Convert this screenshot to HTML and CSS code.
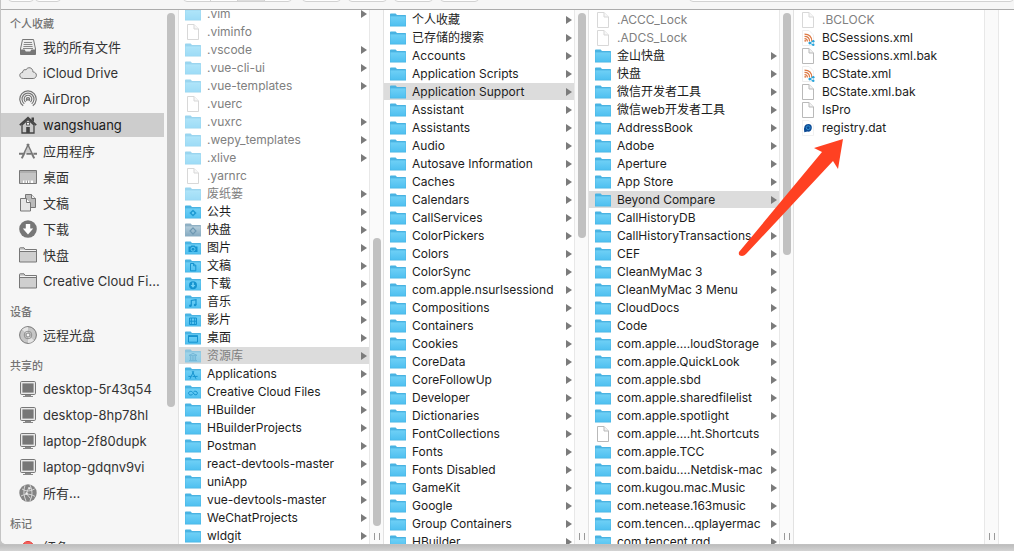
FILE: index.html
```html
<!DOCTYPE html>
<html lang="zh-CN">
<head>
<meta charset="utf-8">
<title>wangshuang</title>
<link rel="stylesheet" href="styles.css">
</head>
<body>
<svg class="defs" aria-hidden="true">
  <defs>
    <linearGradient id="blue" x1="0" y1="0" x2="0" y2="1"><stop offset="0" stop-color="#6fd0f6"/><stop offset="1" stop-color="#4fc0f0"/></linearGradient>
    <linearGradient id="dull" x1="0" y1="0" x2="0" y2="1"><stop offset="0" stop-color="#b4cddb"/><stop offset="1" stop-color="#86abc2"/></linearGradient>
    <symbol id="dir" viewBox="0 0 16 14"><path d="M0 1.2Q0 .4.8.4H5.6L7 2H15.4Q16 2 16 2.8V13.6H0Z" fill="#49b3e2"/><path d="M.4 3.4H15.6V12.8H.4Z" fill="url(#blue)"/></symbol>
    <symbol id="dir-dull" viewBox="0 0 16 14"><path d="M0 1.2Q0 .4.8.4H5.6L7 2H15.4Q16 2 16 2.8V13.6H0Z" fill="#8fb0c4"/><path d="M.4 3.4H15.6V12.8H.4Z" fill="url(#dull)"/><path d="M8 4.8 11 8 8 11.2 5 8Z" fill="none" stroke="#6f98b2" stroke-width="1.2"/></symbol>
    <symbol id="public" viewBox="0 0 16 14"><use href="#dir"/><path d="M8 4.4 11.6 8 8 11.6 4.4 8Z" fill="#1e9bd4"/><circle cx="8" cy="8" r="1.2" fill="#63caf4"/></symbol>
    <symbol id="pics" viewBox="0 0 16 14"><use href="#dir"/><path d="M3.5 5.5H5.6L6.4 4.5H9.6L10.4 5.5H12.5V11H3.5Z" fill="#1593cf"/><circle cx="8" cy="8.2" r="2" fill="none" stroke="#63caf4"/></symbol>
    <symbol id="docs" viewBox="0 0 16 14"><use href="#dir"/><path d="M5.5 4.5H8.8L10.8 6.5V11.8H5.5ZM8.6 4.5V6.8H10.8" fill="none" stroke="#1593cf"/></symbol>
    <symbol id="down" viewBox="0 0 16 14"><use href="#dir"/><circle cx="8" cy="8.2" r="4" fill="#1593cf"/><path d="M7.2 5.6H8.8V8H10.4L8 10.8 5.6 8H7.2Z" fill="#74d2f7"/></symbol>
    <symbol id="music" viewBox="0 0 16 14"><use href="#dir"/><path d="M6.3 10.8V5.4L11 4.6V10" fill="none" stroke="#1593cf" stroke-width="1.2"/><circle cx="5.4" cy="10.8" r="1.3" fill="#1593cf"/><circle cx="10.1" cy="10" r="1.3" fill="#1593cf"/></symbol>
    <symbol id="film" viewBox="0 0 16 14"><use href="#dir"/><path d="M4.5 5H11.5V11.5H4.5ZM6.3 5V11.5M9.7 5V11.5M4.5 8.2H11.5" fill="none" stroke="#1593cf"/></symbol>
    <symbol id="desk" viewBox="0 0 16 14"><use href="#dir"/><path d="M3.5 4.8H12.5V11.2H3.5Z" fill="none" stroke="#1593cf"/><path d="M3 4.4H13V6H3Z" fill="#1593cf"/></symbol>
    <symbol id="lib" viewBox="0 0 16 14"><use href="#dir"/><path d="M4 6.4 8 4.4 12 6.4ZM4 11.6H12M5.4 7V11M7.2 7V11M8.9 7V11M10.6 7V11" fill="none" stroke="#1593cf" stroke-width=".9"/></symbol>
    <symbol id="apps" viewBox="0 0 16 14"><use href="#dir"/><path d="M8.8 4.2 5 11.8M7.2 4.2 11 11.8M3.4 9.4H6M7.6 9.4H12.6" fill="none" stroke="#1593cf" stroke-width="1"/></symbol>
    <symbol id="cc" viewBox="0 0 16 14"><use href="#dir"/><path d="M8 8.8C6.6 10.8 3.6 10.2 3.6 8.2S6.6 5.6 8 7.6L9 9C10 10.4 12.4 10 12.4 8.2S10 5.4 8.6 6.8" fill="none" stroke="#1593cf"/></symbol>
    <symbol id="file" viewBox="0 0 16 16"><path d="M2.5.5H9L13.5 5V15.5H2.5Z" fill="#fff" stroke="#b9b9b9"/><path d="M9 .5V5H13.5" fill="#f2f2f2" stroke="#b9b9b9"/></symbol>
    <symbol id="xml" viewBox="0 0 16 16"><path d="M2.5.5H9L13.5 5V15.5H2.5Z" fill="#fff" stroke="#eee"/><path d="M4.5 8.6Q7.4 8.6 7.4 11.5M4.5 6.3Q9.6 6.3 9.6 11.5M4.5 4.1Q11.8 4.1 11.8 11.5" fill="none" stroke="#dd7a45" stroke-width="1.2"/><circle cx="5.2" cy="10.8" r=".9" fill="#dd7a45"/><path d="M13.2 11 9.8 13 13.2 15" fill="none" stroke="#2aa5dc" stroke-width="1"/><circle cx="13.3" cy="11.2" r="1.2" fill="#2aa5dc"/><circle cx="9.8" cy="13.1" r="1.4" fill="#2aa5dc"/><circle cx="13.3" cy="14.8" r="1.2" fill="#2aa5dc"/></symbol>
    <symbol id="dat" viewBox="0 0 16 16"><path d="M2.5.5H9L13.5 5V15.5H2.5Z" fill="#fff" stroke="#f1f1f1"/><path d="M4.3 12.2Q3 4 8.3 4 12 4.2 11.8 8 11.4 12 7.4 11.6L4.3 12.2Z" fill="#0c4a94"/><circle cx="8.2" cy="7.7" r="1.9" fill="none" stroke="#2f8fd0"/></symbol>

    <symbol id="s-all" viewBox="0 0 18 18"><path d="M3.5 1.5H14.5L16.5 11V16.5H1.5V11Z" fill="#eee" stroke="#777"/><path d="M5 4.5H13M4.6 6.5H13.4M4.4 8.5H13.6M4 10.5H14" stroke="#888"/><path d="M1.5 11.5H5.6L6.8 13.5H11.2L12.4 11.5H16.5V16.5H1.5Z" fill="#777"/></symbol>
    <symbol id="s-cloud" viewBox="0 0 18 18"><path d="M4.3 14.5C-.4 14.3-.2 8.6 3.6 8.5 3.4 5.8 6.2 5.2 7 5.9 8.5 2.3 14 3.3 13.9 7.9 18.6 8.2 18.4 14.2 14.2 14.5Z" fill="#e4e4e4" stroke="#777"/></symbol>
    <symbol id="s-air" viewBox="0 0 18 18"><g fill="none" stroke="#777" stroke-width="1.2"><path d="M4.2 15.8A8.2 8.2 0 1 1 13.8 15.8"/><path d="M5.3 13.8A6 6 0 1 1 12.7 13.8"/><path d="M6.6 12A3.8 3.8 0 1 1 11.4 12"/><circle cx="9" cy="9.2" r="1.7"/></g><path d="M9 9.5 5.4 17H12.6Z" fill="#f6f6f6"/><circle cx="9" cy="9.2" r="1" fill="#777"/></symbol>
    <symbol id="s-home" viewBox="0 0 18 18"><path d="M3 9V17H15V9L9 3.5Z" fill="#c9c9c9" stroke="#444" stroke-width="1.3"/><path d="M.8 9.2 9 1.8 17.2 9.2" fill="none" stroke="#444" stroke-width="1.8"/><path d="M12.5 1.5H15V6L12.5 4Z" fill="#444"/><path d="M7.2 11H10.8V17H7.2Z" fill="#444"/><rect x="7.6" y="6.4" width="2.8" height="2.6" fill="#fff" stroke="#444" stroke-width=".8"/></symbol>
    <symbol id="s-apps" viewBox="0 0 18 18"><g fill="none" stroke="#777" stroke-width="2"><path d="M9.8 2 2.8 16.4"/><path d="M8.2 2 15.2 16.4"/><path d="M0 11.8H4.6M7.4 11.8H12M14.4 11.8H18"/></g><path d="M9 4.6 6 10.8H12Z" fill="#ccc"/></symbol>
    <symbol id="s-desk" viewBox="0 0 18 18"><path d="M.5 2.5H17.5V15.5H.5Z" fill="#c4c4c4" stroke="#777"/><path d="M1 4H17" stroke="#999"/><path d="M4 12.5H14V15H4Z" fill="#fff"/><path d="M6 12.5V15M8.5 12.5V15M11 12.5V15" stroke="#999"/></symbol>
    <symbol id="s-docs" viewBox="0 0 18 18"><path d="M6.5.5H12.5L16.5 4.5V13.5H6.5Z" fill="#bbb" stroke="#777"/><path d="M12.5.5V4.5H16.5" fill="#eee" stroke="#777"/><path d="M1.5 4.5H7.5L11.5 8.5V17H1.5Z" fill="#e6e6e6" stroke="#777"/><path d="M7.5 4.5V8.5H11.5" fill="#fff" stroke="#777"/></symbol>
    <symbol id="s-down" viewBox="0 0 18 18"><circle cx="9" cy="9" r="8.8" fill="#777"/><path d="M6.8 4H11.2V8.6H14.2L9 14.4 3.8 8.6H6.8Z" fill="#fff"/></symbol>
    <symbol id="s-dir" viewBox="0 0 18 18"><path d="M.5 16V2.5Q.5 1.8 1.2 1.8H5L6.2 3.5H17.5V16Z" fill="#cfcfcf" stroke="#777"/><path d="M1 5.5H17" stroke="#777"/><path d="M1 4.5H17" stroke="#f4f4f4"/></symbol>
    <symbol id="s-disc" viewBox="0 0 18 18"><circle cx="9" cy="9" r="8.4" fill="#c6c6c6" stroke="#777"/><path d="M9 9 3 3.6Q5.6 1 9 .9ZM9 9 15 14.4Q12.4 17 9 17.1Z" fill="#e5e5e5"/><circle cx="9" cy="9" r="3.8" fill="none" stroke="#909090"/><circle cx="9" cy="9" r="2" fill="#f4f4f4" stroke="#888"/></symbol>
    <symbol id="s-pc" viewBox="0 0 18 18"><rect x="1.5" y="1.5" width="15" height="13" rx="1.2" fill="#e9e9e9" stroke="#777"/><path d="M3.4 3.4H14.6V12.6H3.4Z" fill="#777"/><path d="M6 15H12V16H14V17H4V16H6Z" fill="#888"/></symbol>
    <symbol id="s-globe" viewBox="0 0 18 18"><circle cx="9" cy="9" r="8.7" fill="#838383"/><path d="M3 5Q9 9 15.6 5M2 12Q9 8 16 12.4M6 1.2Q3.4 9 7 17M11 1Q15 9 11 17M10 3 7.4 9.6 11.6 14.6" fill="none" stroke="#ddd" stroke-width=".9"/><circle cx="7.6" cy="9.4" r="1.2" fill="#eee"/><circle cx="10.6" cy="4.4" r="1.1" fill="#eee"/></symbol>
    <symbol id="s-red" viewBox="0 0 18 18"><circle cx="9" cy="9" r="5.6" fill="#f5605c" stroke="#e0443f"/></symbol>
  </defs>
</svg>

<main class="window">
  <header class="toolbar">
    <div class="group nav"><button aria-label="后退"></button><button aria-label="前进"></button></div>
    <div class="group views"><button aria-label="图标"></button><button aria-label="列表"></button><button class="on" aria-label="分栏"></button><button aria-label="封面流"></button></div>
    <button class="tool" aria-label="排列"></button>
    <button class="tool" aria-label="操作"></button>
    <button class="tool" aria-label="共享"></button>
    <button class="tool" aria-label="标记"></button>
    <input class="search" type="search" aria-label="搜索">
  </header>
  <div class="panes">
    <nav class="sidebar">
      <div class="places">
        <h2>个人收藏</h2>
        <a href="#"><svg><use href="#s-all"/></svg>我的所有文件</a>
        <a href="#"><svg><use href="#s-cloud"/></svg>iCloud Drive</a>
        <a href="#"><svg><use href="#s-air"/></svg>AirDrop</a>
        <a href="#" class="current"><svg><use href="#s-home"/></svg>wangshuang</a>
        <a href="#"><svg><use href="#s-apps"/></svg>应用程序</a>
        <a href="#"><svg><use href="#s-desk"/></svg>桌面</a>
        <a href="#"><svg><use href="#s-docs"/></svg>文稿</a>
        <a href="#"><svg><use href="#s-down"/></svg>下载</a>
        <a href="#"><svg><use href="#s-dir"/></svg>快盘</a>
        <a href="#"><svg><use href="#s-dir"/></svg>Creative Cloud Fi...</a>
        <h2>设备</h2>
        <a href="#"><svg><use href="#s-disc"/></svg>远程光盘</a>
        <h2>共享的</h2>
        <a href="#"><svg><use href="#s-pc"/></svg>desktop-5r43q54</a>
        <a href="#"><svg><use href="#s-pc"/></svg>desktop-8hp78hl</a>
        <a href="#"><svg><use href="#s-pc"/></svg>laptop-2f80dupk</a>
        <a href="#"><svg><use href="#s-pc"/></svg>laptop-gdqnv9vi</a>
        <a href="#"><svg><use href="#s-globe"/></svg>所有...</a>
        <h2>标记</h2>
        <a href="#"><svg><use href="#s-red"/></svg>红色</a>
      </div>
      <div class="track"><span class="thumb" style="height:394px"></span></div>
    </nav>

    <section class="column">
      <ul class="list scrolled">
        <li class="dir dim"><svg><use href="#dir"/></svg>.vim</li>
        <li class="dim"><svg><use href="#file"/></svg>.viminfo</li>
        <li class="dir dim"><svg><use href="#dir"/></svg>.vscode</li>
        <li class="dir dim"><svg><use href="#dir"/></svg>.vue-cli-ui</li>
        <li class="dir dim"><svg><use href="#dir"/></svg>.vue-templates</li>
        <li class="dim"><svg><use href="#file"/></svg>.vuerc</li>
        <li class="dir dim"><svg><use href="#dir"/></svg>.vuxrc</li>
        <li class="dir dim"><svg><use href="#dir"/></svg>.wepy_templates</li>
        <li class="dir dim"><svg><use href="#dir"/></svg>.xlive</li>
        <li class="dim"><svg><use href="#file"/></svg>.yarnrc</li>
        <li class="dir dim"><svg><use href="#dir"/></svg>废纸篓</li>
        <li class="dir"><svg><use href="#public"/></svg>公共</li>
        <li class="dir"><svg><use href="#dir-dull"/></svg>快盘</li>
        <li class="dir"><svg><use href="#pics"/></svg>图片</li>
        <li class="dir"><svg><use href="#docs"/></svg>文稿</li>
        <li class="dir"><svg><use href="#down"/></svg>下载</li>
        <li class="dir"><svg><use href="#music"/></svg>音乐</li>
        <li class="dir"><svg><use href="#film"/></svg>影片</li>
        <li class="dir"><svg><use href="#desk"/></svg>桌面</li>
        <li class="dir dim current"><svg><use href="#lib"/></svg>资源库</li>
        <li class="dir"><svg><use href="#apps"/></svg>Applications</li>
        <li class="dir"><svg><use href="#cc"/></svg>Creative Cloud Files</li>
        <li class="dir"><svg><use href="#dir"/></svg>HBuilder</li>
        <li class="dir"><svg><use href="#dir"/></svg>HBuilderProjects</li>
        <li class="dir"><svg><use href="#dir"/></svg>Postman</li>
        <li class="dir"><svg><use href="#dir"/></svg>react-devtools-master</li>
        <li class="dir"><svg><use href="#dir"/></svg>uniApp</li>
        <li class="dir"><svg><use href="#dir"/></svg>vue-devtools-master</li>
        <li class="dir"><svg><use href="#dir"/></svg>WeChatProjects</li>
        <li class="dir"><svg><use href="#dir"/></svg>wldgit</li>
      </ul>
      <div class="track end"><span class="thumb" style="height:288px"></span><span class="grip"></span></div>
    </section>

    <section class="column">
      <ul class="list">
        <li class="dir"><svg><use href="#dir"/></svg>个人收藏</li>
        <li class="dir"><svg><use href="#dir"/></svg>已存储的搜索</li>
        <li class="dir"><svg><use href="#dir"/></svg>Accounts</li>
        <li class="dir"><svg><use href="#dir"/></svg>Application Scripts</li>
        <li class="dir current"><svg><use href="#dir"/></svg>Application Support</li>
        <li class="dir"><svg><use href="#dir"/></svg>Assistant</li>
        <li class="dir"><svg><use href="#dir"/></svg>Assistants</li>
        <li class="dir"><svg><use href="#dir"/></svg>Audio</li>
        <li class="dir"><svg><use href="#dir"/></svg>Autosave Information</li>
        <li class="dir"><svg><use href="#dir"/></svg>Caches</li>
        <li class="dir"><svg><use href="#dir"/></svg>Calendars</li>
        <li class="dir"><svg><use href="#dir"/></svg>CallServices</li>
        <li class="dir"><svg><use href="#dir"/></svg>ColorPickers</li>
        <li class="dir"><svg><use href="#dir"/></svg>Colors</li>
        <li class="dir"><svg><use href="#dir"/></svg>ColorSync</li>
        <li class="dir"><svg><use href="#dir"/></svg>com.apple.nsurlsessiond</li>
        <li class="dir"><svg><use href="#dir"/></svg>Compositions</li>
        <li class="dir"><svg><use href="#dir"/></svg>Containers</li>
        <li class="dir"><svg><use href="#dir"/></svg>Cookies</li>
        <li class="dir"><svg><use href="#dir"/></svg>CoreData</li>
        <li class="dir"><svg><use href="#dir"/></svg>CoreFollowUp</li>
        <li class="dir"><svg><use href="#dir"/></svg>Developer</li>
        <li class="dir"><svg><use href="#dir"/></svg>Dictionaries</li>
        <li class="dir"><svg><use href="#dir"/></svg>FontCollections</li>
        <li class="dir"><svg><use href="#dir"/></svg>Fonts</li>
        <li class="dir"><svg><use href="#dir"/></svg>Fonts Disabled</li>
        <li class="dir"><svg><use href="#dir"/></svg>GameKit</li>
        <li class="dir"><svg><use href="#dir"/></svg>Google</li>
        <li class="dir"><svg><use href="#dir"/></svg>Group Containers</li>
        <li class="dir"><svg><use href="#dir"/></svg>HBuilder</li>
      </ul>
      <div class="track"><span class="thumb" style="height:225px"></span><span class="grip"></span></div>
    </section>

    <section class="column">
      <ul class="list">
        <li class="dim"><svg><use href="#file"/></svg>.ACCC_Lock</li>
        <li class="dim"><svg><use href="#file"/></svg>.ADCS_Lock</li>
        <li class="dir"><svg><use href="#dir"/></svg>金山快盘</li>
        <li class="dir"><svg><use href="#dir"/></svg>快盘</li>
        <li class="dir"><svg><use href="#dir"/></svg>微信开发者工具</li>
        <li class="dir"><svg><use href="#dir"/></svg>微信web开发者工具</li>
        <li class="dir"><svg><use href="#dir"/></svg>AddressBook</li>
        <li class="dir"><svg><use href="#dir"/></svg>Adobe</li>
        <li class="dir"><svg><use href="#dir"/></svg>Aperture</li>
        <li class="dir"><svg><use href="#dir"/></svg>App Store</li>
        <li class="dir current"><svg><use href="#dir"/></svg>Beyond Compare</li>
        <li><svg><use href="#dir"/></svg>CallHistoryDB</li>
        <li class="dir"><svg><use href="#dir"/></svg>CallHistoryTransactions</li>
        <li class="dir"><svg><use href="#dir"/></svg>CEF</li>
        <li class="dir"><svg><use href="#dir"/></svg>CleanMyMac 3</li>
        <li class="dir"><svg><use href="#dir"/></svg>CleanMyMac 3 Menu</li>
        <li class="dir"><svg><use href="#dir"/></svg>CloudDocs</li>
        <li class="dir"><svg><use href="#dir"/></svg>Code</li>
        <li class="dir"><svg><use href="#dir"/></svg>com.apple....loudStorage</li>
        <li class="dir"><svg><use href="#dir"/></svg>com.apple.QuickLook</li>
        <li class="dir"><svg><use href="#dir"/></svg>com.apple.sbd</li>
        <li class="dir"><svg><use href="#dir"/></svg>com.apple.sharedfilelist</li>
        <li class="dir"><svg><use href="#dir"/></svg>com.apple.spotlight</li>
        <li><svg><use href="#file"/></svg>com.apple....ht.Shortcuts</li>
        <li class="dir"><svg><use href="#dir"/></svg>com.apple.TCC</li>
        <li class="dir"><svg><use href="#dir"/></svg>com.baidu....Netdisk-mac</li>
        <li class="dir"><svg><use href="#dir"/></svg>com.kugou.mac.Music</li>
        <li class="dir"><svg><use href="#dir"/></svg>com.netease.163music</li>
        <li class="dir"><svg><use href="#dir"/></svg>com.tencen...qplayermac</li>
        <li class="dir"><svg><use href="#dir"/></svg>com.tencent.rqd</li>
      </ul>
      <div class="track"><span class="thumb" style="height:242px"></span><span class="grip"></span></div>
    </section>

    <section class="column">
      <ul class="list">
        <li class="dim"><svg><use href="#file"/></svg>.BCLOCK</li>
        <li><svg><use href="#xml"/></svg>BCSessions.xml</li>
        <li><svg><use href="#file"/></svg>BCSessions.xml.bak</li>
        <li><svg><use href="#xml"/></svg>BCState.xml</li>
        <li><svg><use href="#file"/></svg>BCState.xml.bak</li>
        <li><svg><use href="#file"/></svg>IsPro</li>
        <li><svg><use href="#dat"/></svg>registry.dat</li>
      </ul>
      <div class="track"><span class="grip"></span></div>
    </section>
    <div class="blank"></div>
  </div>
</main>
<svg class="pointer" viewBox="0 0 106 120" aria-hidden="true"><path d="M105 1 76 10 84 14 1 114Q0 118 4 118 6 118 8 116L95 23 100 31Z" fill="#ff4122"/></svg>
</body>
</html>
```

FILE: styles.css
```css
* { box-sizing: border-box; }

body {
  margin: 0;
  height: 100vh;
  padding: 0 0 7px 1px;
  overflow: hidden;
  position: relative;
  background: linear-gradient(#c4c4c4, #c4c4c4 calc(100% - 7px), #bdbdbd calc(100% - 6px), #d3d3d3);
  font-family: Inter, "Noto Sans CJK SC", sans-serif;
  color: #1c1c1c;
}

.defs { position: absolute; width: 0; height: 0; }

.window {
  height: 100%;
  display: flex;
  flex-direction: column;
  overflow: hidden;
  background: #fff;
  border-bottom-left-radius: 5px;
}

/* Toolbar */
.toolbar {
  flex: none;
  height: 10px;
  overflow: hidden;
  display: flex;
  align-items: flex-end;
  padding: 0 0 7px 7px;
  background: #f6f6f6;
  border-bottom: 1px solid #acacac;
}
.toolbar button, .search {
  height: 22px;
  padding: 0;
  background: #fdfdfd;
  border: 1px solid #d2d2d2;
  border-radius: 4px;
}
.group { display: flex; }
.nav { gap: 1px; margin-right: 122px; }
.nav button { width: 26px; }
.views { margin-right: 11px; }
.views button { width: 28px; border-radius: 0; margin-right: -1px; }
.views button:first-child { border-bottom-left-radius: 4px; }
.views button:last-child { border-bottom-right-radius: 4px; }
.views .on { background: #dedede; }
.tool { width: 39px; margin-right: 7px; }
.search { flex: 1; margin-left: 203px; }

/* Panes */
.panes { flex: 1; min-height: 0; display: flex; }

.sidebar {
  flex: 0 0 177px;
  display: flex;
  background: #f6f6f6;
  overflow: hidden;
}
.places { flex: 1; margin-top: -3px; font-size: 13px; line-height: 18px; }
.places h2 {
  margin: 0;
  padding: 9px 0 3px 9px;
  font-size: 11px;
  line-height: 16px;
  font-weight: 500;
  color: #737373;
}
.places a {
  display: flex;
  align-items: center;
  gap: 6px;
  height: 24px;
  margin-bottom: 2px;
  padding-left: 18px;
  color: #333;
  text-decoration: none;
  white-space: nowrap;
}
.places svg { flex: none; width: 18px; height: 18px; }
.places .current { background: #cdcdcd; color: #1a1a1a; }
.sidebar .track { background: none; border: 0; }

.column {
  flex: 0 0 205px;
  display: flex;
  overflow: hidden;
  border-left: 1px solid #e2e2e2;
}
.list {
  flex: 1;
  min-width: 0;
  margin: 0;
  padding: 1px 0 0;
  list-style: none;
  font-size: 12px;
  line-height: 17px;
}
.scrolled { margin-top: -6px; }
.list li {
  display: flex;
  align-items: center;
  gap: 6px;
  height: 17px;
  margin-bottom: 1px;
  padding: 0 2px 0 6px;
  white-space: nowrap;
}
.list svg { flex: none; width: 16px; height: 16px; }
.list .dir::after {
  content: "";
  margin-left: auto;
  border-left: 6px solid #7b7b7b;
  border-top: 4px solid transparent;
  border-bottom: 4px solid transparent;
}
.list .current { background: #dcdcdc; }
.list .dim { color: #808080; }
.list .dim svg { opacity: .55; }

.track {
  flex: 0 0 14px;
  display: flex;
  flex-direction: column;
  align-items: center;
  padding: 3px 0 4px;
  background: #fafafa;
  border-left: 1px solid #e8e8e8;
}
.thumb { flex: none; width: 8px; border-radius: 4px; background: #c1c1c1; }
.end .thumb { margin-top: auto; margin-bottom: 7px; }
.grip {
  width: 6px;
  height: 7px;
  margin-top: auto;
  border: solid #999;
  border-width: 0 1px;
}
.end .grip { margin-top: 0; }

.blank { flex: 1; border-left: 1px solid #e8e8e8; }

/* Arrow laid over the columns */
.pointer {
  position: absolute;
  left: 738px;
  top: 138px;
  width: 106px;
  height: 120px;
}
```
